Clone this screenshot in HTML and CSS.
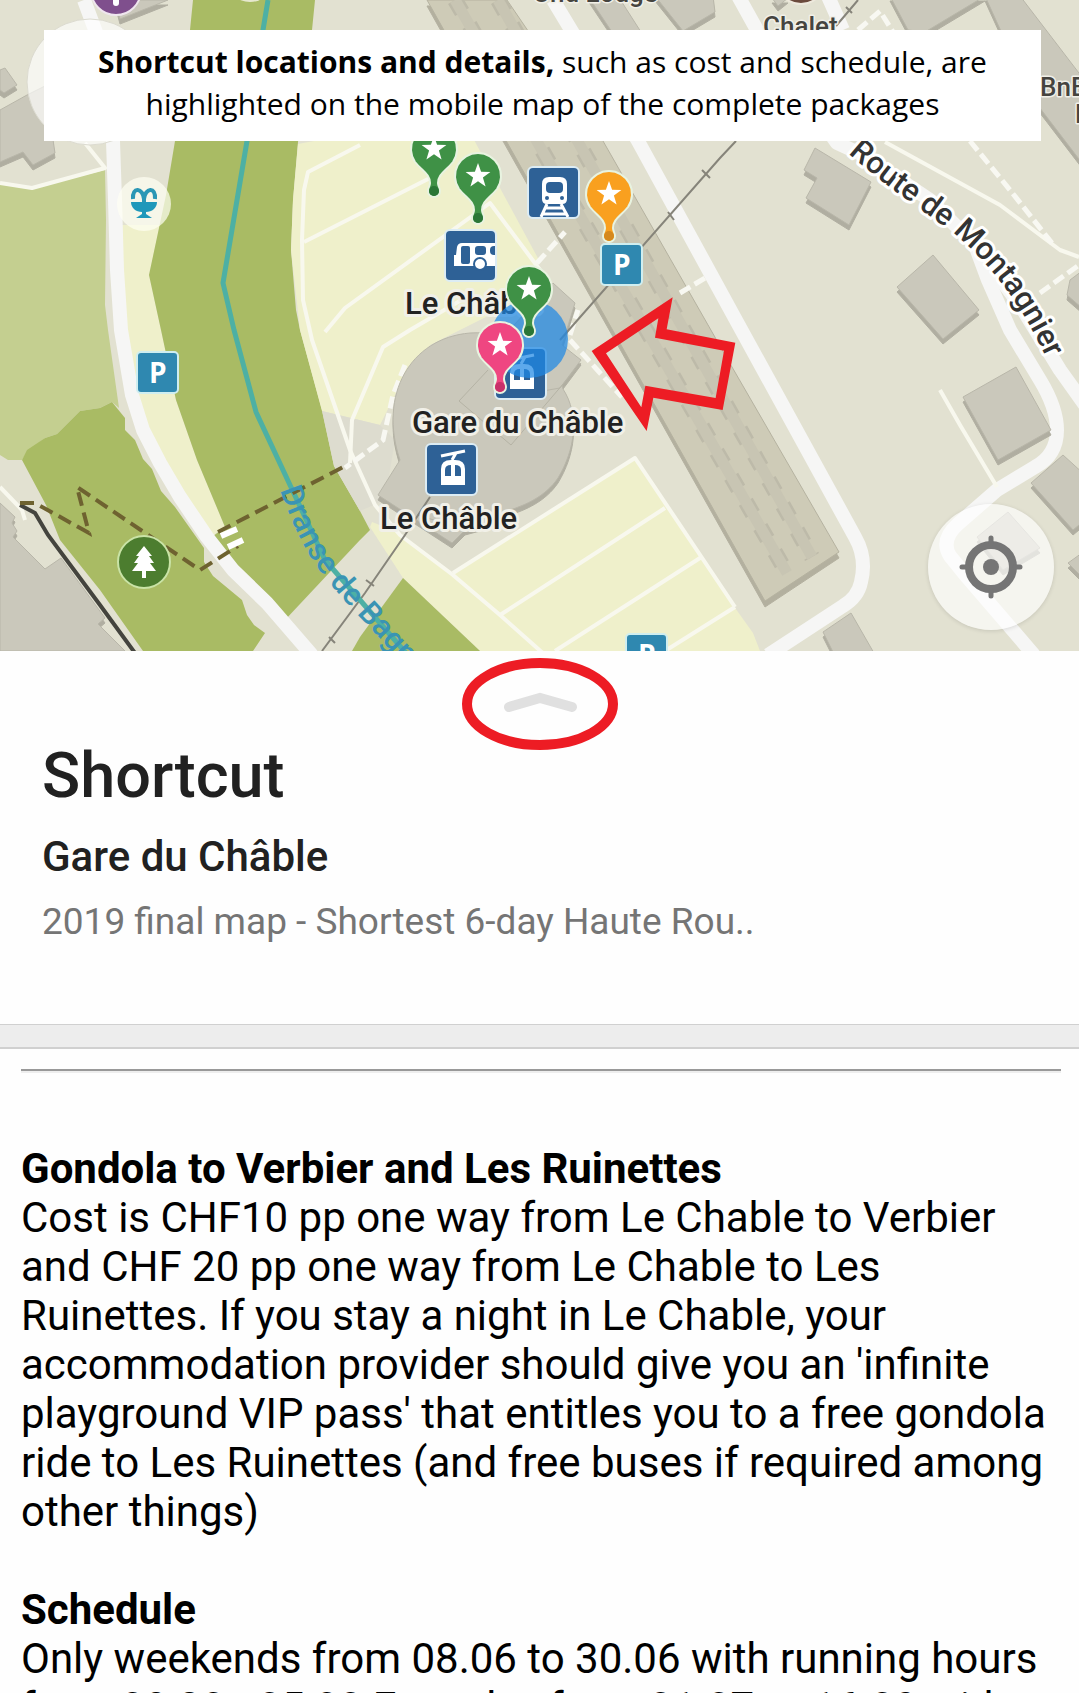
FILE: index.html
```html
<!DOCTYPE html>
<html lang="en">
<head>
<meta charset="utf-8">
<meta name="viewport" content="width=device-width, initial-scale=1">
<title>Shortcut – Gare du Châble</title>
<link rel="stylesheet" href="styles.css">
</head>
<body>
<main class="app">
  <section class="map" aria-label="Map of Le Châble">
    <svg class="map-canvas" viewBox="0 0 1079 651" preserveAspectRatio="xMidYMid slice">
      <defs>
        <polygon id="star" fill="#fff" points="0,-13 3.1,-4.2 12.4,-4 4.9,1.6 7.6,10.5 0,5.2 -7.6,10.5 -4.9,1.6 -12.4,-4 -3.1,-4.2"/>
        <g id="pin-shape">
          <path d="M0-23A23 23 0 0 1 19 13C12 22 4 25 4 34C4 37 6 39 6 42A6 6 0 0 1-6 42C-6 39-4 37-4 34C-4 25-12 22-19 13A23 23 0 0 1 0-23Z"/>
        </g>
        <g id="gondola">
          <rect width="51" height="51" rx="5" class="badge-transit"/>
          <path d="M15 12 39 7M30 9 26 16" stroke="#fff" stroke-width="3" fill="none"/>
          <path d="M15 41V25Q15 16 25 16H29Q39 16 39 25V41Z" fill="#fff"/>
          <path d="M19 32V26Q19 21 25 21V32ZM29 21Q35 21 35 26V32H29Z" fill="#2e6196"/>
        </g>
        <g id="parking">
          <rect width="41" height="41" rx="4" class="badge-parking"/>
          <text x="12" y="31" class="parking-letter">P</text>
        </g>
        <path id="road-name" d="M848 153C890 190 920 208 957 236C990 265 1020 300 1050 366"/>
        <path id="river-name" d="M280 490C300 545 315 568 345 601L420 682"/>
      </defs>

      <rect width="1079" height="651" fill="#e2e1d1"/>

      <!-- fields and woodland -->
      <polygon fill="#c4cf90" points="0,183 34,188 105,170 106,220 105,305 108,330 119,408 112,402 100,408 80,411 57,434 45,438 27,452 22,460 8,460 0,455"/>
      <polygon fill="#a9bb64" points="22,460 27,450 45,438 57,434 80,411 100,408 112,402 125,418 125,430 135,440 143,459 152,469 161,491 175,507 204,548 204,562 213,576 242,600 247,615 254,625 265,633 253,651 143,651 100,590 60,540 46,505"/>
      <polygon fill="#eff0cb" points="122,225 160,225 149,275 161,330 176,400 197,460 225,527 212,536 150,440 118,330"/>
      <polygon fill="#a9bb64" points="193,0 190,30 175,141 166,195 149,275 161,330 176,400 197,460 225,527 212,537 285,620 360,540 370,530 360,511 334,466 322,410 300,330 296,310 291,250 293,200 298,142 312,30 315,0"/>
      <polygon fill="#eff0cb" points="298,144 330,138 473,138 540,262 500,310 470,325 430,345 400,385 380,425 322,411 300,330 291,250 293,200"/>
      <polygon fill="#dddccf" points="322,411 380,425 395,440 385,500 360,511 334,466"/>
      <polygon fill="#eff0cb" points="635,458 453,573 400,533 372,522 370,527 403,578 480,651 760,651 753,633 733,605"/>
      <polygon fill="#a9bb64" points="403,578 480,651 352,651 360,637"/>

      <!-- railway yard -->
      <polygon class="yard" points="427,0 507,0 603,141 732,367 839,552 765,601"/>
      <g class="ties"><path d="M455 0 787 573"/><path d="M498 0 812 557"/></g>
      <g class="tracks"><path d="M455 0 787 573"/><path d="M498 0 812 557"/></g>

      <!-- roads -->
      <g class="roads">
        <path d="M84 0 97 35 113 141 115 200 117 270 121 330 132 395 143 430 160 463 180 497 207 537 233 570 267 603 312 655"/>
        <path d="M553 0 638 141 737 322 855 537Q867 558 861 582 858 597 843 606L768 655"/>
        <path d="M737-6 757 30 837 143 863 155 930 200 975 245 988 280 1010 330 1040 380Q1057 408 1057 430 1057 455 1035 467L997 490 958 524Q940 540 950 556L967 577 1034 655"/>
        <path d="M827-6 843 30M975 245 1020 305 1060 370 1085 405"/>
      </g>
      <g class="paths">
        <path d="M0 183 32 188 105 168 85 143"/>
        <path d="M360 145 308 172 304 190 302 240 303 300 312 340 350 450 375 505 400 535 453 575 500 615 545 655"/>
        <path d="M304 242 430 178M325 332 345 308 490 203 540 270M350 463 352 420 383 347 410 330 470 295"/>
        <path d="M453 573 635 458 735 607M500 615 665 508M555 651 700 558M665 651 735 607"/>
        <path d="M885 142 1000 205 1060 250 1079 257M940 390 960 425 997 487M0 487 22 510 25 520"/>
      </g>
      <g class="steps">
        <path d="M537 263 565 232M405 365 393 395 383 440 345 468M570 340 622 397M570 335 578 310M680 293 705 278"/>
        <path d="M858 30 880 11 893 32M970 141 1010 190 1055 247M1040 293 1079 265"/>
      </g>

      <!-- buildings -->
      <g class="buildings">
        <polygon points="0,110 27,95 45,86 55,153 33,165 23,152 0,162"/>
        <polygon points="0,70 5,68 17,85 4,93 0,90"/>
        <polygon points="115,0 168,0 120,19"/>
        <polygon points="0,503 15,517 12,523 17,531 13,537 45,569 61,558 105,618 98,624 125,651 0,651"/>
        <path d="M400 460C378 395 410 338 470 333C512 330 555 355 563 389C580 415 575 450 558 478C545 497 525 505 510 510L480 526 465 530 452 543 378 495Z"/>
        <polygon points="553,283 575,303 562,345 581,360 560,388 520,395 500,340"/>
        <polygon points="815,148 871,182 849,225 806,198 817,178 804,170"/>
        <polygon points="933,255 979,310 943,339 897,287"/>
        <polygon points="1016,367 1051,430 998,460 963,397"/>
        <polygon points="1063,455 1085,475 1085,520 1073,530 1031,483"/>
        <polygon points="1008,512 1040,548 1003,570 977,537"/>
        <polygon points="1068,563 1082,553 1082,577"/>
        <polygon points="851,613 823,632 837,660 878,660"/>
        <polygon points="1070,280 1082,271 1082,308 1067,295"/>
        <polygon points="890,-4 985,-4 925,32 908,30"/>
        <polygon points="985,-4 1020,-4 1082,77 1082,163 1030,95"/>
        <polygon points="588,-4 618,-4 641,32 612,32"/>
        <polygon points="655,-4 713,-4 715,12 683,31"/>
        <polygon points="772,-2 788,-2 778,6"/>
      </g>
      <path d="M488 370 459 401 511 445 581 363M428 500 418 515 465 530" fill="none" stroke="#b5b3a5"/>

      <!-- cableway -->
      <g class="cable">
        <path d="M858 0 836 26M736 141 720 158 560 340M430 497 405 535 365 593 322 651"/>
        <path d="M702 170 710 178M668 212 674 220M366 580 374 586M329 637 335 643M846 7 852 13"/>
      </g>

      <!-- river -->
      <path class="river" d="M268 0 263 30 247 141 223 283 234 330 256 412 290 485 325 560 360 600 412 660"/>
      <path d="M20 505 35 513 48 535 100 605 135 653" fill="none" stroke="#44443e" stroke-width="4"/>
      <path class="trail" d="M20 503 35 503 89 533 77 487 200 570 238 546M218 532 347 465"/>
      <path d="M221 536 237 529M228 547 243 540" stroke="#fff" stroke-width="6"/>
      <text class="label label-river"><textPath href="#river-name">Dranse de Bagnes</textPath></text>
      <text class="label label-road"><textPath href="#road-name">Route de Montagnier</textPath></text>

      <!-- points of interest -->
      <g>
        <circle cx="116" cy="-10" r="25" fill="#7f4f8d" stroke="#efe6ee" stroke-width="2"/>
        <path d="M116-14V3" stroke="#fff" stroke-width="6" stroke-linecap="round"/>
        <circle cx="250" cy="-22" r="24" fill="#e6e8ce"/>
        <circle cx="801" cy="-20" r="24" fill="#6b4a3c" stroke="#eee9dd" stroke-width="2"/>
        <circle cx="90" cy="82" r="63" fill="#fff" fill-opacity=".65" stroke="#dcdbd0"/>
      </g>
      <text x="533" y="2" class="label label-muted">Und Lodge</text>
      <text x="763" y="35" class="label label-muted">Chalet</text>
      <text x="1040" y="96" class="label label-muted">BnB</text>
      <text x="1075" y="123" class="label label-muted">L</text>

      <g transform="translate(144 204)">
        <circle r="27" fill="#fffff4" fill-opacity=".7"/>
        <path d="M-11-5C-12-18-1-16 0-5C1-16 12-18 11-5M0-10V2" fill="none" stroke="#2a97b5" stroke-width="4"/>
        <path d="M-13-2H13C13 4 8 8 2 8V10L8 14H-8L-2 10V8C-8 8-13 4-13-2Z" fill="#1f98ba"/>
      </g>
      <g transform="translate(144 562)">
        <circle r="26" fill="#4c7d2f" stroke="#c9e3a6" stroke-width="2"/>
        <path d="M0-16 8-6H5L10 1H6L12 9H2V16H-2V9H-12L-6 1H-10L-5-6H-8Z" fill="#fff"/>
      </g>
      <use href="#parking" x="137" y="352"/>
      <use href="#parking" x="601" y="244"/>
      <use href="#parking" x="626" y="634"/>

      <g transform="translate(528 167)">
        <rect width="51" height="51" rx="5" class="badge-transit"/>
        <path d="M14 17Q14 10 21 10H32Q39 10 39 17V32Q39 37 34 37H19Q14 37 14 32Z" fill="#fff"/>
        <rect x="18" y="15" width="17" height="11" rx="4" fill="#2e6196"/>
        <circle cx="19" cy="31" r="2" fill="#2e6196"/><circle cx="34" cy="31" r="2" fill="#2e6196"/>
        <path d="M19 37 13 50M33 37 40 50M17 41H36M15 47H38" stroke="#fff" stroke-width="3"/>
      </g>
      <g transform="translate(445 230)">
        <rect width="51" height="51" rx="5" class="badge-transit"/>
        <path d="M9 36V25H11L12 17Q13 13 17 13H50V36Z" fill="#fff"/>
        <rect x="16" y="16" width="9" height="18" rx="2" fill="#2e6196"/>
        <rect x="30" y="16" width="11" height="9" rx="3" fill="#2e6196"/>
        <path d="M50 16H49Q45 16 45 20V21Q45 25 49 25H50Z" fill="#2e6196"/>
        <circle cx="35" cy="34" r="6" fill="#fff" stroke="#2e6196" stroke-width="2"/>
      </g>
      <use href="#gondola" x="426" y="444"/>
      <use href="#gondola" x="495" y="348"/>

      <text x="405" y="314" class="label">Le Châble</text>
      <text x="412" y="433" class="label">Gare du Châble</text>
      <text x="380" y="529" class="label">Le Châble</text>

      <circle cx="529" cy="339" r="39" fill="#1e88e5" fill-opacity=".72"/>

      <g transform="translate(434 149)" class="pin pin-green"><use href="#pin-shape"/><circle cy="42" r="5"/><use href="#star"/></g>
      <g transform="translate(478 176)" class="pin pin-green"><use href="#pin-shape"/><circle cy="42" r="5"/><use href="#star"/></g>
      <g transform="translate(529 289)" class="pin pin-green"><use href="#pin-shape"/><circle cy="42" r="5"/><use href="#star"/></g>
      <g transform="translate(609 194)" class="pin pin-orange"><use href="#pin-shape"/><circle cy="42" r="5"/><use href="#star"/></g>
      <g transform="translate(500 345)" class="pin pin-pink"><use href="#pin-shape"/><circle cy="42" r="5"/><use href="#star"/></g>

      <path transform="translate(580 280) scale(.3333)" fill="#ed1c24" fill-rule="evenodd" d="M35 213 278 52 260 148 466 188 428 390 220 353 200 453ZM78 220 184 382 196 317 407 354 432 212 225 173 235 115Z"/>
    </svg>
    <p class="banner"><strong>Shortcut locations and details,</strong> such as cost and schedule, are highlighted on the mobile map of the complete packages</p>
    <button class="locate" type="button" aria-label="My location">
      <svg width="64" height="64" viewBox="-32 -32 64 64">
        <g fill="none" stroke="#757575">
          <circle r="22" stroke-width="8"/>
          <path d="M0-29V-24M0 29V24M-29 0H-24M29 0H24" stroke-width="5" stroke-linecap="round"/>
        </g>
        <circle r="8" fill="#757575"/>
      </svg>
    </button>
  </section>

  <header class="sheet">
    <button class="expand" type="button" aria-label="Expand details">
      <svg width="160" height="96" viewBox="0 0 160 96" fill="none">
        <ellipse cx="80" cy="48" rx="73" ry="41" stroke="#ed1c24" stroke-width="10"/>
        <path d="M49 51 80 42 112 51" stroke="#e0e0e0" stroke-width="10" stroke-linecap="round"/>
      </svg>
    </button>
    <h1 class="title">Shortcut</h1>
    <h2 class="place">Gare du Châble</h2>
    <p class="source">2019 final map - Shortest 6-day Haute Rou..</p>
  </header>

  <article class="details">
    <hr class="rule">
    <section class="entry">
      <h3 class="entry-title">Gondola to Verbier and Les Ruinettes</h3>
      <p class="entry-text">Cost is CHF10 pp one way from Le Chable to Verbier and CHF 20 pp one way from Le Chable to Les Ruinettes. If you stay a night in Le Chable, your accommodation provider should give you an 'infinite playground VIP pass' that entitles you to a free gondola ride to Les Ruinettes (and free buses if required among other things)</p>
    </section>
    <section class="entry">
      <h3 class="entry-title">Schedule</h3>
      <p class="entry-text">Only weekends from 08.06 to 30.06 with running hours from 08:30 - 05:00 Everyday from 01.07 to 16.09 with</p>
    </section>
  </article>
</main>
</body>
</html>
```
FILE: styles.css
```css
* {
  box-sizing: border-box;
}

body {
  margin: 0;
  background: #fefefe;
  color: #000;
  font-family: Roboto, "Liberation Sans", sans-serif;
}

h1, h2, h3, p {
  margin: 0;
}

button {
  padding: 0;
  border: 0;
  background: none;
}

.app {
  display: flex;
  flex-direction: column;
  height: 100vh;
  overflow: hidden;
}

/* Map */
.map {
  position: relative;
  flex: none;
  aspect-ratio: 1079 / 651;
  overflow: hidden;
}

.map-canvas {
  display: block;
  width: 100%;
  height: 100%;
}

.banner {
  position: absolute;
  top: 30px;
  left: 44px;
  right: 38px;
  padding: 11px 48px 16px;
  background: #fff;
  font-family: "Open Sans", "Noto Sans", sans-serif;
  font-size: 30px;
  line-height: 42px;
  text-align: center;
}

.locate {
  position: absolute;
  right: 25px;
  bottom: 21px;
  display: grid;
  place-items: center;
  width: 126px;
  height: 126px;
  border-radius: 50%;
  background: rgba(255, 255, 255, 0.65);
  box-shadow: 0 1px 4px rgba(0, 0, 0, 0.12);
}

.yard {
  fill: #cecbb7;
  stroke: #b5b2a0;
  filter: drop-shadow(0 6px 0 #b3b09f);
}

.ties {
  fill: none;
  stroke: #bdbaa9;
  stroke-width: 16;
  stroke-dasharray: 14 15;
}

.tracks {
  fill: none;
  stroke: #c8c5b3;
  stroke-width: 11;
}

.roads {
  fill: none;
  stroke: #f6f6f5;
  stroke-width: 14;
  stroke-linejoin: round;
}

.paths {
  fill: none;
  stroke: #f8f8ee;
  stroke-width: 4;
  stroke-linejoin: round;
}

.steps {
  fill: none;
  stroke: #f8f8f2;
  stroke-width: 5;
  stroke-dasharray: 12 5;
}

.buildings {
  fill: #cac8bb;
  stroke: #b8b6a9;
  filter: drop-shadow(0 5px 0 #b0aea1);
}

.cable {
  fill: none;
  stroke: #86847a;
  stroke-width: 2;
}

.river {
  fill: none;
  stroke: #4db0a4;
  stroke-width: 5;
}

.trail {
  fill: none;
  stroke: #6e6230;
  stroke-width: 4;
  stroke-dasharray: 14 7;
}

.badge-transit {
  fill: #2e6196;
  stroke: #dcecf4;
  stroke-width: 2;
}

.badge-parking {
  fill: #2f88b0;
  stroke: #cfeef0;
  stroke-width: 2;
}

.parking-letter {
  fill: #fff;
  font: 700 28px "Open Sans", sans-serif;
}

.label {
  fill: #222;
  stroke: #f1f0e8;
  stroke-width: 6;
  stroke-linejoin: round;
  paint-order: stroke;
  font-size: 31px;
  font-weight: 500;
}

.label-road {
  fill: #333;
  stroke: #fff;
}

.label-river {
  fill: #3a94b4;
  stroke: none;
}

.label-muted {
  fill: #45443f;
  font-size: 26px;
  stroke-width: 3;
}

.pin {
  stroke: #e8f3e0;
  stroke-width: 2;
}

.pin circle,
.pin use + circle + use {
  stroke: none;
}

.pin-green { fill: #3f9146; }
.pin-green circle { fill: #2a7636; }
.pin-orange { fill: #f9a01f; }
.pin-orange circle { fill: #d5891d; }
.pin-pink { fill: #ef4681; }
.pin-pink circle { fill: #c8316a; }

/* Place summary */
.sheet {
  display: flex;
  flex-direction: column;
  padding: 5px 42px 82px;
  color: #212121;
}

.expand {
  align-self: center;
  height: 96px;
}

.title {
  margin-top: -13px;
  font-size: 63px;
  font-weight: 500;
  line-height: 74px;
}

.place {
  margin-top: 19px;
  font-size: 42px;
  font-weight: 500;
  line-height: 49px;
}

.source {
  margin-top: 19px;
  color: #757575;
  font-size: 37px;
  line-height: 43px;
}

/* Description */
.details {
  padding: 22px 18px 0 21px;
  border-top: 22px solid #ededed;
  box-shadow: inset 0 2px 0 #d0d0d0, 0 -1px 0 #d0d0d0;
}

.rule {
  height: 4px;
  margin: 0 0 71px;
  border: 0;
  border-top: 2px solid #999;
  background: #eee;
}

.entry {
  margin-bottom: 49px;
}

.entry-title,
.entry-text {
  font-size: 42px;
  line-height: 49px;
}

.entry-title {
  font-weight: 700;
}
```
